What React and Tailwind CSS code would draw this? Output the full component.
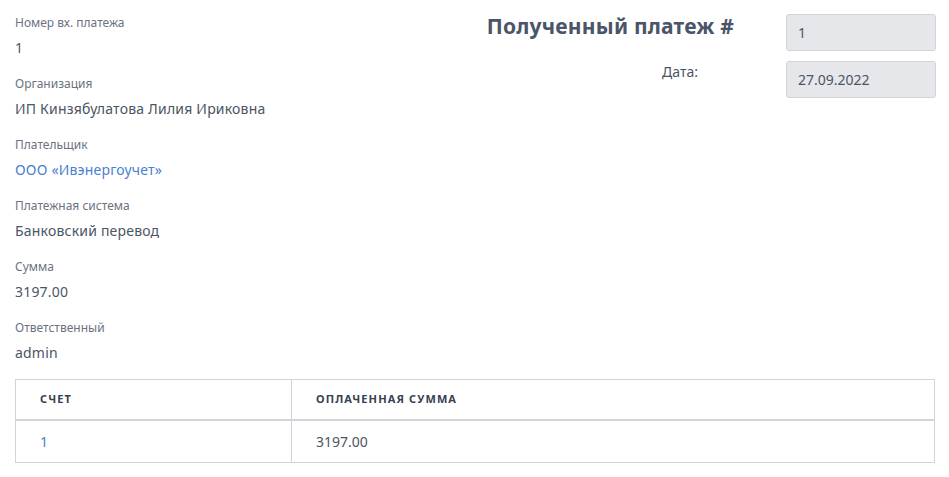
export default function App() {
    const fields = [
        { label: "Номер вх. платежа", value: "1" },
        { label: "Организация", value: "ИП Кинзябулатова Лилия Ириковна" },
        { label: "Плательщик", value: "ООО «Ивэнергоучет»", link: true },
        { label: "Платежная система", value: "Банковский перевод" },
        { label: "Сумма", value: "3197.00" },
        { label: "Ответственный", value: "admin" },
    ];

    return (
        <div
            className="bg-white min-h-screen pl-[15px] pr-[14px] pt-[14px] text-[#4b5563]"
            style={{ fontFamily: "'Noto Sans', sans-serif" }}
        >
            <div className="flex justify-between">
                {/* LEFT FIELDS */}
                <div className="flex flex-col">
                    {fields.map((f) => (
                        <div key={f.label} className="h-[61px]">
                            <div className="mt-[1px] text-[12px] leading-[16px] text-[#6b7280]">{f.label}</div>
                            <div
                                className={`mt-[7px] text-[14px] leading-[20px] tracking-[0.2px] ${
                                    f.link ? "text-[#4a80d0]" : "text-[#4b5563]"
                                }`}
                            >
                                {f.value}
                            </div>
                        </div>
                    ))}
                </div>

                {/* RIGHT HEADER */}
                <div className="flex flex-col items-end -mr-[1px]">
                    <div className="flex items-start">
                        <h1 className="text-[21px] leading-[24px] font-bold tracking-[0.2px] text-[#4a5568] mr-[52px]">
                            Полученный платеж #
                        </h1>
                        <div className="w-[150px] h-[37px] bg-[#e5e7eb] border border-[#d1d5db] rounded-[3px] px-[11px] flex items-center text-[14px] text-[#4b5563]">
                            1
                        </div>
                    </div>
                    <div className="flex items-start mt-[10px]">
                        <span className="text-[14px] leading-[20px] text-[#4b5563] mt-[1px] mr-[88px]">Дата:</span>
                        <div className="w-[150px] h-[37px] bg-[#e5e7eb] border border-[#d1d5db] rounded-[3px] px-[11px] flex items-center text-[14px] text-[#4b5563]">
                            27.09.2022
                        </div>
                    </div>
                </div>
            </div>

            {/* TABLE */}
            <table className="w-full mt-[-1px] border border-[#d1d5db] border-collapse">
                <thead>
                    <tr className="border-b-2 border-[#d1d5db] h-[40px]">
                        <th className="w-[276px] text-left pl-[24px] border-r border-[#d1d5db] text-[11px] font-bold tracking-[0.1em] text-[#374151]">
                            СЧЕТ
                        </th>
                        <th className="text-left pl-[24px] text-[11px] font-bold tracking-[0.1em] text-[#374151]">
                            ОПЛАЧЕННАЯ СУММА
                        </th>
                    </tr>
                </thead>
                <tbody>
                    <tr className="h-[43px]">
                        <td className="pl-[24px] border-r border-[#d1d5db] text-[14px] text-[#4a80d0]">1</td>
                        <td className="pl-[24px] text-[14px] text-[#4b5563]">3197.00</td>
                    </tr>
                </tbody>
            </table>
        </div>
    );
}
